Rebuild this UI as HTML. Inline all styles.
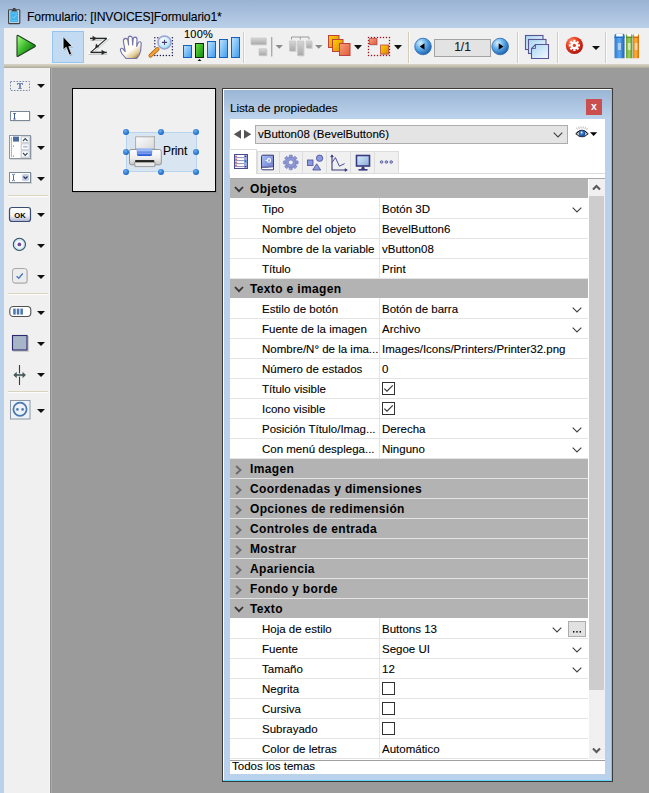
<!DOCTYPE html>
<html><head><meta charset="utf-8">
<style>
*{margin:0;padding:0;box-sizing:border-box}
html,body{width:649px;height:793px;overflow:hidden}
body{position:relative;background:#9b9b9b;font-family:"Liberation Sans",sans-serif;color:#000}
.a{position:absolute}
.ic,.cv{position:absolute;display:block}
#title{left:0;top:0;width:649px;height:28px;background:linear-gradient(#99b3d2,#bad0e9)}
#lborder{left:0;top:28px;width:4px;height:765px;background:#b9d1ea}
#toolbar{left:4px;top:28px;width:645px;height:36px;background:#f0f0f0}
#band{left:4px;top:64px;width:645px;height:4px;background:linear-gradient(#d9d5c6,#c4c0b0 60%,#a9a79b)}
#palette{left:4px;top:68px;width:46px;height:725px;background:#f0f0f0}
#palb{left:49px;top:68px;width:3px;height:725px;background:linear-gradient(90deg,#f7f7f7 33.3%,#8f8f8f 33.3%,#8f8f8f 66.6%,#ababab 66.6%)}
.sep{position:absolute;width:2px;background:linear-gradient(90deg,#d6cdb8 50%,#fbfbf8 50%)}
.hsep{position:absolute;height:2px;left:8px;width:40px;background:linear-gradient(#d9d4bc 50%,#fdfdfd 50%)}
.darr{position:absolute;width:0;height:0;border-left:4px solid transparent;border-right:4px solid transparent;border-top:4px solid #111}
#canvas{left:72px;top:88px;width:144px;height:104px;background:#f0f0f0;border:1px solid #000;box-shadow:1px 1px 0 rgba(0,0,0,0.08)}
#pw{left:222px;top:88px;width:391px;height:694px;background:#b9d1ea;border:1px solid #3a3a3a}
#pwgrad{left:223px;top:89px;width:388px;height:30px;background:linear-gradient(#9bb5d5,#bcd3ec);border-top:1px solid #fff}
#pwwl{left:223px;top:89px;width:1px;height:691px;background:#fff}
#pwcyan{left:611px;top:89px;width:1px;height:691px;background:#5fd3f5}
#pwcyanb{left:223px;top:780px;width:389px;height:1px;background:#5fd3f5}
#content{left:230px;top:119px;width:375px;height:655px;background:#fff}
.hd{position:absolute;left:230px;width:358px;height:19px;background:#b3b3b3}
.ht{position:absolute;left:250px;height:20px;line-height:20px;font-weight:bold;font-size:12px;letter-spacing:0.35px;color:#000;white-space:nowrap}
.rl{position:absolute;left:230px;width:358px;height:1px;background:#e4e4e4}
.cl{position:absolute;left:379px;width:1px;height:20px;background:#e4e4e4}
.nt{-webkit-text-stroke:0.1px #000;position:absolute;left:262px;height:20px;line-height:20px;font-size:11.5px;white-space:nowrap}
.vt{-webkit-text-stroke:0.1px #000;position:absolute;left:382px;height:20px;line-height:20px;font-size:11.5px;white-space:nowrap}
.chk{position:absolute;left:382px;width:13px;height:13px;border:1px solid #333;background:#fff}
.dotsb{position:absolute;left:568px;width:18px;height:16px;background:#e1e1e1;border:1px solid #adadad;font-size:11px;line-height:11px;text-align:center;letter-spacing:0px}
.hdl{position:absolute;width:6px;height:6px;border-radius:50%;background:radial-gradient(circle at 40% 35%,#6ab0f0,#1a68c8 70%)}
.txt{-webkit-text-stroke:0.1px #000;position:absolute;white-space:nowrap;font-size:11.5px}
</style></head><body>
<div class="a" id="title"></div>
<div class="a" id="lborder"></div>
<div class="a" id="toolbar"></div>
<div class="a" id="band"></div>
<div class="a" id="palette"></div>
<div class="a" id="palb"></div>

<!-- title -->
<svg class="ic" style="left:8px;top:8px" width="13" height="17" viewBox="0 0 13 17"><rect x="0.6" y="1.8" width="11.2" height="13.8" rx="0.6" fill="#c4d8ee" stroke="#404040" stroke-width="1.1"/><rect x="2.3" y="3.3" width="7.8" height="10.8" fill="#40b4ec"/><rect x="4.9" y="0" width="2.6" height="2.4" fill="#404040"/><rect x="3.6" y="2" width="5.2" height="1.4" fill="#404040"/><path d="M4 8.6 L5.6 10.2 L8.6 7" fill="none" stroke="#9fd8f4" stroke-width="0.8"/><path d="M3.4 5.2 H9 M3.4 12.6 H9" stroke="#7cc8f0" stroke-width="0.6"/></svg>
<div class="txt" style="left:27px;top:7px;line-height:20px;font-size:12.2px;letter-spacing:-0.15px">Formulario: [INVOICES]Formulario1*</div>


<!-- toolbar icons -->
<svg class="ic" style="left:14px;top:33px" width="24" height="26" viewBox="0 0 24 26">
<defs><linearGradient id="gplay" x1="0" y1="0.1" x2="0.9" y2="0.9"><stop offset="0" stop-color="#a0fa80"/><stop offset="0.5" stop-color="#3cb82c"/><stop offset="1" stop-color="#0c6a0e"/></linearGradient></defs>
<path d="M3 3.2 Q3 2 4.1 2.6 L20.8 12.1 Q21.9 12.9 20.8 13.7 L4.1 23.3 Q3 23.9 3 22.7 Z" fill="url(#gplay)" stroke="#1e3e1e" stroke-width="1.1" stroke-linejoin="round"/>
</svg>
<div class="a" style="left:52px;top:31px;width:32px;height:32px;background:#c2dbf2;border:1px solid #96c6f0"></div>
<svg class="ic" style="left:60px;top:35px" width="16" height="22" viewBox="0 0 16 22">
<path d="M3.1 1.6 L3.1 14.8 L6.2 12.2 L9.2 20 L11.6 19 L8.8 11.6 L12.4 11.4 Z" fill="rgba(0,0,0,0.25)" transform="translate(0.8 1)"/>
<path d="M3.1 1.6 L3.1 14.8 L6.2 12.2 L9.2 20 L11.6 19 L8.8 11.6 L12.4 11.4 Z" fill="#000" stroke="#fff" stroke-width="0.7" stroke-linejoin="round"/>
</svg>
<svg class="ic" style="left:87px;top:34px" width="24" height="24" viewBox="0 0 24 24">
<g fill="none" stroke="rgba(0,0,0,0.16)" stroke-width="2.4" transform="translate(0.3 1.3)"><path d="M3 4.4 H19.8 L3.6 18.4 H19.8"/></g>
<g fill="none" stroke="#fff" stroke-width="3" opacity="0.85"><path d="M3 4.4 H19.8 L3.6 18.4 H19.8"/></g>
<g stroke="#262a2a" fill="none"><path d="M3 4.4 H19.8" stroke-width="1.5"/><path d="M19.8 4.4 L3.6 18.4" stroke-width="1.25"/><path d="M3.6 18.4 H19.8" stroke-width="1.5"/></g>
<g fill="#262a2a"><path d="M5.6 1.8 L9.8 4.4 L5.6 7 Z"/><path d="M14.6 15.8 L18.8 18.4 L14.6 21 Z"/><path d="M8.2 14 L9 9.6 L12.2 12.9 Z"/></g>
</svg>
<svg class="ic" style="left:118px;top:34px" width="26" height="27" viewBox="0 0 26 27">
<defs><linearGradient id="ghand" x1="0.1" y1="0" x2="0.75" y2="1"><stop offset="0" stop-color="#ffffe4"/><stop offset="0.62" stop-color="#fffcf4"/><stop offset="0.85" stop-color="#e2cc98"/><stop offset="1" stop-color="#a88234"/></linearGradient></defs>
<path d="M8 24.5 L4.2 20 Q2 17 2.4 15.2 Q3.2 13.6 5 14.8 L7.2 17.6 L5.4 7.4 Q5.2 4.6 7.6 4.4 Q9.6 4.4 9.9 6.6 L10.6 11 L10.2 4.2 Q10.2 2.2 12.2 2.1 Q14.2 2.2 14.3 4.2 L14.7 11 L15.1 5.4 Q15.3 3.1 17.1 3.1 Q19.1 3.3 19 5.4 L18.7 12.4 L19.9 9.4 Q20.6 7.6 22 7.8 Q23.5 8.2 23.2 10 L22.6 17 Q22 20.6 18.6 24.5 Z" fill="url(#ghand)" stroke="#7474ac" stroke-width="1.15" stroke-linejoin="round"/>
</svg>
<svg class="ic" style="left:147px;top:33px" width="28" height="26" viewBox="0 0 28 26">
<g fill="#1d1d55"><circle cx="7.8" cy="4.8" r="0.75"/><circle cx="10.8" cy="4.8" r="0.75"/><circle cx="25.4" cy="4.8" r="0.75"/><circle cx="25.4" cy="7.8" r="0.75"/><circle cx="25.4" cy="10.8" r="0.75"/><circle cx="25.4" cy="13.8" r="0.75"/><circle cx="25.4" cy="16.8" r="0.75"/><circle cx="25.4" cy="19.8" r="0.75"/><circle cx="25.4" cy="22.6" r="0.75"/><circle cx="22.4" cy="22.6" r="0.75"/><circle cx="19.4" cy="22.6" r="0.75"/><circle cx="16.4" cy="22.6" r="0.75"/><circle cx="13.4" cy="22.6" r="0.75"/><circle cx="10.4" cy="22.6" r="0.75"/><circle cx="7.8" cy="22.6" r="0.75"/><circle cx="7.8" cy="7.8" r="0.75"/><circle cx="7.8" cy="10.8" r="0.75"/><circle cx="7.8" cy="13.8" r="0.75"/></g>
<path d="M3.5 22.6 L10.5 16" stroke="#a05a10" stroke-width="4" stroke-linecap="round"/>
<path d="M3.5 22.6 L10.5 16" stroke="#f5a030" stroke-width="2.6" stroke-linecap="round"/>
<defs><radialGradient id="glens" cx="0.4" cy="0.35" r="0.7"><stop offset="0" stop-color="#ffffff"/><stop offset="0.6" stop-color="#c8eefa"/><stop offset="1" stop-color="#8ccbe8"/></radialGradient></defs>
<circle cx="17.5" cy="9.4" r="6.5" fill="url(#glens)" stroke="#9aa2d4" stroke-width="1.5"/>
<path d="M17.5 6.8 V12 M14.9 9.4 H20.1" stroke="#4a3e70" stroke-width="1.1"/>
</svg>
<div class="txt" style="left:184px;top:28px;font-size:11px;line-height:12px;letter-spacing:0.2px">100%</div>
<svg class="ic" style="left:182px;top:35px" width="60" height="27" viewBox="0 0 60 27">
<defs><linearGradient id="gbar" x1="0" y1="0" x2="1" y2="1"><stop offset="0" stop-color="#bfe4ff"/><stop offset="1" stop-color="#3a9af0"/></linearGradient>
<linearGradient id="gbarg" x1="0" y1="0" x2="1" y2="1"><stop offset="0" stop-color="#70e040"/><stop offset="1" stop-color="#0a8a10"/></linearGradient></defs>
<rect x="1.5" y="10.5" width="8" height="12" fill="url(#gbar)" stroke="#1660b8" stroke-width="1"/>
<rect x="13.5" y="8.5" width="8" height="14" fill="url(#gbarg)" stroke="#0a2a0a" stroke-width="1"/>
<rect x="25.5" y="6.5" width="8" height="16" fill="url(#gbar)" stroke="#1660b8" stroke-width="1"/>
<rect x="37.5" y="4.5" width="8" height="18" fill="url(#gbar)" stroke="#1660b8" stroke-width="1"/>
<rect x="49.5" y="2.5" width="8" height="20" fill="url(#gbar)" stroke="#1660b8" stroke-width="1"/>
<path d="M15.5 26 L17.5 24 L19.5 26 Z" fill="#111"/>
</svg>
<div class="sep" style="left:243px;top:32px;height:31px"></div>
<svg class="ic" style="left:248px;top:34px" width="76" height="24" viewBox="0 0 76 24">
<defs><linearGradient id="ggr" x1="0" y1="0" x2="0" y2="1"><stop offset="0" stop-color="#d6d6d6"/><stop offset="1" stop-color="#a9a9a9"/></linearGradient></defs>
<g fill="rgba(0,0,0,0.10)"><rect x="4" y="5" width="15" height="6.5"/><rect x="12" y="15.8" width="7.5" height="6.5"/></g>
<rect x="3" y="4" width="15" height="6.5" fill="url(#ggr)" stroke="#c4c4c4" stroke-width="0.6"/>
<rect x="11" y="14.8" width="7.5" height="6.5" fill="url(#ggr)" stroke="#c4c4c4" stroke-width="0.6"/>
<rect x="23.2" y="3" width="1.1" height="19.5" fill="#9a9a9a"/>
<path d="M27.5 11 L35 11 L31.25 14.8 Z" fill="#8a8a8a"/>
<path d="M43.5 5.5 V3 H61 V5.5 M52.3 3 V5.5" fill="none" stroke="#9a9a9a" stroke-width="1"/>
<g fill="rgba(0,0,0,0.10)"><rect x="42.6" y="8" width="6" height="10"/><rect x="50.6" y="8" width="6" height="14.5"/><rect x="59.2" y="8" width="5.6" height="7"/></g>
<rect x="41.6" y="7" width="5.8" height="10" fill="url(#ggr)" stroke="#c4c4c4" stroke-width="0.6"/>
<rect x="49.6" y="7" width="6" height="14.5" fill="url(#ggr)" stroke="#c4c4c4" stroke-width="0.6"/>
<rect x="58.2" y="7" width="5.6" height="7" fill="url(#ggr)" stroke="#c4c4c4" stroke-width="0.6"/>
<path d="M67 11 L74.5 11 L70.75 14.8 Z" fill="#8a8a8a"/>
</svg>
<svg class="ic" style="left:326px;top:33px" width="80" height="25" viewBox="0 0 80 25">
<defs><linearGradient id="gyel" x1="0" y1="0" x2="1" y2="1"><stop offset="0" stop-color="#ffd000"/><stop offset="1" stop-color="#d88a00"/></linearGradient>
<linearGradient id="gsal" x1="0" y1="0" x2="1" y2="1"><stop offset="0" stop-color="#f8a078"/><stop offset="1" stop-color="#e05a38"/></linearGradient></defs>
<rect x="2.5" y="2.5" width="10.5" height="12" fill="url(#gyel)" stroke="#c04040" stroke-width="1"/>
<rect x="6.5" y="6.5" width="10.5" height="12" fill="url(#gyel)" stroke="#c04040" stroke-width="1"/>
<rect x="13.5" y="10.5" width="10.5" height="12" fill="url(#gsal)" stroke="#c04040" stroke-width="1"/>
<path d="M28 12 L36 12 L32 16.5 Z" fill="#111"/>
<g fill="#a01018"><rect x="41.85" y="3.85" width="1.3" height="1.3"/><rect x="41.85" y="21.85" width="1.3" height="1.3"/><rect x="44.85" y="3.85" width="1.3" height="1.3"/><rect x="44.85" y="21.85" width="1.3" height="1.3"/><rect x="47.85" y="3.85" width="1.3" height="1.3"/><rect x="47.85" y="21.85" width="1.3" height="1.3"/><rect x="50.85" y="3.85" width="1.3" height="1.3"/><rect x="50.85" y="21.85" width="1.3" height="1.3"/><rect x="53.85" y="3.85" width="1.3" height="1.3"/><rect x="53.85" y="21.85" width="1.3" height="1.3"/><rect x="56.85" y="3.85" width="1.3" height="1.3"/><rect x="56.85" y="21.85" width="1.3" height="1.3"/><rect x="59.85" y="3.85" width="1.3" height="1.3"/><rect x="59.85" y="21.85" width="1.3" height="1.3"/><rect x="62.85" y="3.85" width="1.3" height="1.3"/><rect x="62.85" y="21.85" width="1.3" height="1.3"/><rect x="41.85" y="6.85" width="1.3" height="1.3"/><rect x="62.85" y="6.85" width="1.3" height="1.3"/><rect x="41.85" y="9.85" width="1.3" height="1.3"/><rect x="62.85" y="9.85" width="1.3" height="1.3"/><rect x="41.85" y="12.85" width="1.3" height="1.3"/><rect x="62.85" y="12.85" width="1.3" height="1.3"/><rect x="41.85" y="15.85" width="1.3" height="1.3"/><rect x="62.85" y="15.85" width="1.3" height="1.3"/><rect x="41.85" y="18.85" width="1.3" height="1.3"/><rect x="62.85" y="18.85" width="1.3" height="1.3"/></g>
<rect x="44.2" y="6.2" width="7.6" height="6.4" fill="rgba(0,0,0,0.15)"/>
<rect x="43.6" y="5.6" width="7.2" height="6" fill="url(#gsal)" stroke="#c04848" stroke-width="0.8"/>
<rect x="55.2" y="12.6" width="8.2" height="9.4" fill="rgba(0,0,0,0.15)"/>
<rect x="54.6" y="12" width="8" height="9" fill="url(#gyel)" stroke="#c04848" stroke-width="0.8"/>
<path d="M68 12 L76 12 L72 16.5 Z" fill="#111"/>
</svg>
<div class="sep" style="left:408px;top:32px;height:31px"></div>
<svg class="ic" style="left:413px;top:37px" width="98" height="21" viewBox="0 0 98 21">
<defs><radialGradient id="gnav" cx="0.35" cy="0.3" r="0.75"><stop offset="0" stop-color="#d8f0ff"/><stop offset="0.5" stop-color="#5aaae8"/><stop offset="1" stop-color="#1a5aa8"/></radialGradient></defs>
<circle cx="10" cy="9.5" r="8.3" fill="url(#gnav)" stroke="#2a68b0" stroke-width="0.8"/>
<path d="M6.8 9.5 L11.5 6.3 L11.5 12.7 Z" fill="#000"/>
<rect x="21.5" y="2.5" width="56" height="17" fill="#e3e3e3" stroke="#a3a3a3" stroke-width="1"/>
<circle cx="87.2" cy="9.5" r="8.3" fill="url(#gnav)" stroke="#2a68b0" stroke-width="0.8"/>
<path d="M90.4 9.5 L85.7 6.3 L85.7 12.7 Z" fill="#000"/>
</svg>
<div class="txt" style="left:434px;top:39px;width:57px;text-align:center;font-size:12px;line-height:17px;color:#1a1a1a">1/1</div>
<div class="sep" style="left:517px;top:32px;height:31px"></div>
<svg class="ic" style="left:523px;top:33px" width="28" height="28" viewBox="0 0 28 28">
<defs><linearGradient id="gwin" x1="0" y1="0" x2="1" y2="1"><stop offset="0" stop-color="#a8d6f2"/><stop offset="1" stop-color="#f2faff"/></linearGradient></defs>
<rect x="2.5" y="2.5" width="17.5" height="14" fill="url(#gwin)" stroke="#5a5494" stroke-width="1.1"/>
<rect x="5.5" y="6.5" width="17.5" height="14" fill="url(#gwin)" stroke="#5a5494" stroke-width="1.1"/>
<path d="M12.5 11.5 H25.5 V25.5 H8.5 V15.5 Z" fill="url(#gwin)" stroke="#5a5494" stroke-width="1.1"/>
<path d="M12.5 11.5 V15.5 H8.5" fill="none" stroke="#5a5494" stroke-width="0.9"/>
</svg>
<div class="sep" style="left:557px;top:32px;height:31px"></div>
<svg class="ic" style="left:564px;top:35px" width="38" height="21" viewBox="0 0 38 21">
<defs><radialGradient id="gred" cx="0.35" cy="0.3" r="0.8"><stop offset="0" stop-color="#ff9a70"/><stop offset="0.45" stop-color="#e83a20"/><stop offset="1" stop-color="#a01010"/></radialGradient></defs>
<circle cx="10.4" cy="10.4" r="8.6" fill="url(#gred)"/>
<g fill="#fff" transform="translate(10.4 10.4)">
<circle r="3.6"/>
<rect x="-1.1" y="-5.6" width="2.2" height="11.2"/><rect x="-5.6" y="-1.1" width="11.2" height="2.2"/>
<rect x="-1.1" y="-5.6" width="2.2" height="11.2" transform="rotate(45)"/><rect x="-5.6" y="-1.1" width="11.2" height="2.2" transform="rotate(45)"/>
</g>
<circle cx="10.4" cy="10.4" r="1.6" fill="#e04020"/>
<path d="M28 11 L36 11 L32 15 Z" fill="#111"/>
</svg>
<div class="sep" style="left:605px;top:32px;height:31px"></div>
<svg class="ic" style="left:612px;top:32px" width="30" height="28" viewBox="0 0 30 28">
<defs><linearGradient id="gbb" x1="0" y1="0" x2="1" y2="0"><stop offset="0" stop-color="#2e7ad0"/><stop offset="0.5" stop-color="#5aa8f0"/><stop offset="1" stop-color="#2060b0"/></linearGradient>
<linearGradient id="ggb" x1="0" y1="0" x2="1" y2="0"><stop offset="0" stop-color="#6aa030"/><stop offset="0.5" stop-color="#a0d060"/><stop offset="1" stop-color="#5a8a28"/></linearGradient>
<linearGradient id="gob" x1="0" y1="0" x2="1" y2="0"><stop offset="0" stop-color="#f08010"/><stop offset="0.5" stop-color="#ffb040"/><stop offset="1" stop-color="#d86a00"/></linearGradient></defs>
<path d="M2.5 3.5 Q2.5 1.8 4 1.8 L11 1.8 Q12.5 1.8 12.5 3.5 L12.5 26.3 L2.5 26.3 Z" fill="url(#gbb)"/>
<path d="M14 3.5 Q14 2 15.2 2 L19.2 2 Q20.4 2 20.4 3.5 L20.4 26.3 L14 26.3 Z" fill="url(#ggb)"/>
<path d="M21 3.5 Q21 2 22.2 2 L25.8 2 Q27 2 27 3.5 L27 26.3 L21 26.3 Z" fill="url(#gob)"/>
<rect x="4.2" y="1.8" width="6.6" height="3" fill="#ffffff"/>
<rect x="15.2" y="2" width="4" height="2.8" fill="#ffffff"/>
<rect x="22.2" y="2" width="3.6" height="2.8" fill="#ffffff"/>
<rect x="2.5" y="4.6" width="10" height="1.2" fill="#1a68c0"/><rect x="14" y="4.6" width="6.4" height="1.2" fill="#5a8a20"/><rect x="21" y="4.6" width="6" height="1.2" fill="#d06000"/>
<rect x="5.8" y="11" width="3.2" height="7" fill="#a8d0f4"/><rect x="15.8" y="11" width="2.8" height="7" fill="#d0e8b0"/><rect x="22.8" y="11" width="2.6" height="7" fill="#ffd8b0"/>
</svg>

<!-- palette -->
<div class="hsep" style="top:195px"></div>
<div class="hsep" style="top:293px"></div>
<div class="hsep" style="top:391px"></div>
<div class="darr" style="left:37px;top:84px"></div>
<div class="darr" style="left:37px;top:115px"></div>
<div class="darr" style="left:37px;top:146px"></div>
<div class="darr" style="left:37px;top:177px"></div>
<div class="darr" style="left:37px;top:213px"></div>
<div class="darr" style="left:37px;top:244px"></div>
<div class="darr" style="left:37px;top:275px"></div>
<div class="darr" style="left:37px;top:311px"></div>
<div class="darr" style="left:37px;top:342px"></div>
<div class="darr" style="left:37px;top:373px"></div>
<div class="darr" style="left:37px;top:409px"></div>


<svg class="ic" style="left:8px;top:79px" width="24" height="14" viewBox="0 0 24 14">
<rect x="2.5" y="2.5" width="19" height="9" fill="none" stroke="#7a8aa8" stroke-width="1" stroke-dasharray="1.6 1.4"/>
<path d="M9 4.2 H15 V5.9 H14.5 L14.1 5 H12.7 V9.1 H13.7 V9.7 H10.3 V9.1 H11.3 V5 H9.9 L9.5 5.9 H9 Z" fill="#4763a0"/>
</svg>
<svg class="ic" style="left:8px;top:109px" width="24" height="14" viewBox="0 0 24 14">
<rect x="3" y="3" width="19.5" height="9.5" fill="rgba(0,0,0,0.12)"/>
<rect x="2.5" y="2.5" width="19" height="9" fill="#fff" stroke="#7a8898" stroke-width="1"/>
<path d="M5.3 4.5 H7.7 M6.5 4.5 V10 M5.3 10 H7.7" stroke="#3a5a98" stroke-width="1"/>
</svg>
<svg class="ic" style="left:8px;top:134px" width="25" height="26" viewBox="0 0 25 26">
<rect x="2" y="2" width="22" height="24" fill="rgba(0,0,0,0.12)"/>
<rect x="1.5" y="1.5" width="21" height="23" fill="#fff" stroke="#8a96a4" stroke-width="1"/>
<rect x="12.5" y="2" width="9.5" height="22" fill="#dcdcdc"/>
<rect x="5" y="2.6" width="6" height="5" fill="#4a6aa0"/>
<g fill="#505050"><circle cx="3.4" cy="4" r="0.6"/><circle cx="3.4" cy="6" r="0.6"/><circle cx="3.4" cy="8" r="0.6"/><circle cx="3.4" cy="10" r="0.6"/><circle cx="3.4" cy="12" r="0.6"/><circle cx="3.4" cy="14" r="0.6"/><circle cx="3.4" cy="16" r="0.6"/><circle cx="3.4" cy="18" r="0.6"/><circle cx="3.4" cy="20" r="0.6"/><circle cx="3.4" cy="22" r="0.6"/><circle cx="5.4" cy="12" r="0.6"/><circle cx="5.4" cy="22" r="0.6"/></g>
<rect x="13.5" y="3" width="7.5" height="5.5" fill="#fff" stroke="#b8c0cc" stroke-width="0.6"/>
<rect x="13.5" y="10" width="7.5" height="5.5" fill="#fff" stroke="#b8c0cc" stroke-width="0.6"/>
<rect x="13.5" y="17" width="7.5" height="6" fill="#fff" stroke="#b8c0cc" stroke-width="0.6"/>
<path d="M15 7 L17.25 4.6 L19.5 7" fill="none" stroke="#3a4a60" stroke-width="1.2"/>
<rect x="14.8" y="11.8" width="5" height="2" rx="1" fill="#b8c4d8"/>
<path d="M15 19 L17.25 21.4 L19.5 19" fill="none" stroke="#3a4a60" stroke-width="1.2"/>
</svg>
<svg class="ic" style="left:8px;top:171px" width="25" height="14" viewBox="0 0 25 14">
<rect x="2" y="2" width="22" height="11" fill="rgba(0,0,0,0.12)"/>
<rect x="1.5" y="1.5" width="21" height="10" fill="#fff" stroke="#7a8898" stroke-width="1"/>
<path d="M4.2 3.2 Q5.5 3.6 5.5 4.4 V8.6 Q5.5 9.4 4.2 9.8 M6.8 3.2 Q5.5 3.6 5.5 4.4 M5.5 8.6 Q5.5 9.4 6.8 9.8" fill="none" stroke="#3a5a98" stroke-width="0.9"/>
<rect x="14" y="3" width="7" height="7" rx="1.5" fill="#c8d0e4"/>
<path d="M15.5 5.5 L17.5 7.6 L19.5 5.5" fill="none" stroke="#2a3a60" stroke-width="1.3"/>
</svg>
<svg class="ic" style="left:8px;top:205px" width="25" height="19" viewBox="0 0 25 19">
<defs><linearGradient id="gok" x1="0" y1="0" x2="0" y2="1"><stop offset="0" stop-color="#fff"/><stop offset="0.6" stop-color="#f2f2f6"/><stop offset="1" stop-color="#a8b0d0"/></linearGradient></defs>
<rect x="1.5" y="2.5" width="21" height="14" rx="2.5" fill="url(#gok)" stroke="#3a4a70" stroke-width="1.2"/>
<text x="12" y="12.6" text-anchor="middle" font-family="Liberation Sans" font-weight="bold" font-size="7.6" fill="#000">OK</text>
</svg>
<svg class="ic" style="left:12px;top:237px" width="15" height="15" viewBox="0 0 15 15">
<defs><radialGradient id="grad1" cx="0.5" cy="0.5" r="0.5"><stop offset="0.5" stop-color="#f8fcff"/><stop offset="1" stop-color="#a8d4e8"/></radialGradient></defs>
<circle cx="7.4" cy="7.4" r="6.1" fill="url(#grad1)" stroke="#3a5060" stroke-width="1.1"/>
<circle cx="7.4" cy="7.4" r="1.9" fill="#7a4a9a"/>
</svg>
<svg class="ic" style="left:11px;top:267px" width="18" height="18" viewBox="0 0 18 18">
<rect x="2" y="2" width="15" height="15" rx="2.5" fill="rgba(0,0,0,0.12)"/>
<rect x="1.5" y="1.5" width="14.5" height="14.5" rx="2.5" fill="#ececec" stroke="#a8a8a8" stroke-width="1"/>
<path d="M5.6 9.2 L7.8 11.2 L11.8 6.6" fill="none" stroke="#4a7cbc" stroke-width="1.5"/>
</svg>
<svg class="ic" style="left:8px;top:304px" width="25" height="15" viewBox="0 0 25 15">
<rect x="1.8" y="2.5" width="21" height="10" rx="3.5" fill="#fff" stroke="#505050" stroke-width="1.1"/>
<rect x="5.2" y="4.6" width="2.5" height="6" fill="#4a76ae"/><rect x="8.8" y="4.6" width="2.5" height="6" fill="#4a76ae"/><rect x="12.4" y="4.6" width="2.5" height="6" fill="#4a76ae"/>
</svg>
<svg class="ic" style="left:10px;top:333px" width="20" height="20" viewBox="0 0 20 20">
<rect x="3" y="3" width="16" height="16" fill="rgba(0,0,0,0.15)"/>
<rect x="2.5" y="2.5" width="14.5" height="14.5" fill="#a8b4c8" stroke="#2a2a70" stroke-width="1.1"/>
</svg>
<svg class="ic" style="left:11px;top:364px" width="18" height="22" viewBox="0 0 18 22">
<path d="M8.5 1 V21" stroke="#3a3a3a" stroke-width="1.1"/>
<path d="M1.8 11 L6 7 V9.7 H11.2 V7 L15.4 11 L11.2 15 V12.3 H6 V15 Z" fill="#4a5c5c" stroke="#fff" stroke-width="0.7" stroke-linejoin="round"/>
</svg>
<svg class="ic" style="left:9px;top:399px" width="22" height="21" viewBox="0 0 22 21">
<rect x="1.5" y="1.5" width="19.5" height="18.5" fill="#eef2f8" stroke="#8898a8" stroke-width="1"/>
<circle cx="11" cy="10.3" r="6.6" fill="none" stroke="#4a7ab0" stroke-width="1.8"/>
<circle cx="8.4" cy="10.4" r="1.3" fill="#4a7ab0"/><circle cx="13.6" cy="10.4" r="1.3" fill="#4a7ab0"/>
</svg>

<!-- canvas -->
<div class="a" id="canvas"></div>

<div class="a" style="left:126px;top:132px;width:71px;height:40px;background:#d9e5f1;border:1px solid #b6d4ee"></div>
<svg class="ic" style="left:128px;top:135px" width="35" height="34" viewBox="0 0 35 34">
<defs><linearGradient id="gpap" x1="0" y1="0" x2="1" y2="1"><stop offset="0" stop-color="#fff"/><stop offset="1" stop-color="#d8d8d8"/></linearGradient>
<linearGradient id="gbody" x1="0" y1="0" x2="0" y2="1"><stop offset="0" stop-color="#ffffff"/><stop offset="0.6" stop-color="#ececec"/><stop offset="1" stop-color="#c4c4c4"/></linearGradient>
<linearGradient id="gpb" x1="0" y1="0" x2="0" y2="1"><stop offset="0" stop-color="#b4cbf6"/><stop offset="0.5" stop-color="#6c94e8"/><stop offset="1" stop-color="#2458d8"/></linearGradient></defs>
<path d="M7.6 1.8 H25.6 L26.4 1 V14 H7.6 Z" fill="url(#gpap)" stroke="#9a9a9a" stroke-width="0.8"/>
<path d="M3 14.5 Q1.5 14.5 1.5 16.5 V28 Q1.5 29.8 3.5 29.8 H31.5 Q33.3 29.8 33.3 28 V16.5 Q33.3 14.5 31.5 14.5 Z" fill="url(#gbody)" stroke="#8c8c8c" stroke-width="0.9"/>
<path d="M8.5 13 H24.5 L24 19.5 Q24 21 22.5 21 H10.5 Q9 21 9 19.5 Z" fill="url(#gpb)"/><path d="M9.4 15.6 H23.8 M9.6 18.4 H23.6" stroke="rgba(255,255,255,0.45)" stroke-width="0.6"/>
<rect x="7.2" y="25.2" width="19" height="2.2" fill="#000"/>
<path d="M6.5 27.2 H27.2 L26.7 31.6 H7 Z" fill="#e8e8e8" stroke="#8a8a8a" stroke-width="0.8"/>
</svg>
<div class="txt" style="left:163px;top:144px;font-size:12px;line-height:14px;color:#000;letter-spacing:-0.1px">Print</div>
<div class="hdl" style="left:123px;top:129px"></div><div class="hdl" style="left:123px;top:149px"></div><div class="hdl" style="left:123px;top:169px"></div><div class="hdl" style="left:158px;top:129px"></div><div class="hdl" style="left:158px;top:169px"></div><div class="hdl" style="left:193px;top:129px"></div><div class="hdl" style="left:193px;top:149px"></div><div class="hdl" style="left:193px;top:169px"></div>

<!-- property window -->
<div class="a" id="pw"></div>
<div class="a" id="pwgrad"></div>
<div class="a" id="pwwl"></div>
<div class="a" id="pwcyan"></div>
<div class="a" id="pwcyanb"></div>
<div class="txt" style="left:230px;top:98px;line-height:20px;font-size:11.8px;letter-spacing:-0.1px">Lista de propiedades</div>
<div class="a" style="left:586px;top:99px;width:16px;height:16px;background:#c9504f;color:#fff;font-weight:bold;font-size:10.5px;line-height:15px;text-align:center">x</div>
<div class="a" id="content"></div>
<div class="a" style="left:230px;top:178px;width:375px;height:1px;background:#a8a8a8"></div>
<div class="hd" style="top:179px"></div>
<svg class="ic" style="left:234px;top:186px" width="10" height="7" viewBox="0 0 10 7"><path d="M1 1 L5 5.2 L9 1" fill="none" stroke="#333" stroke-width="1.8"/></svg>
<div class="ht" style="top:179px">Objetos</div>
<div class="rl" style="top:218px"></div>
<div class="cl" style="top:198px"></div>
<div class="nt" style="top:199px">Tipo</div>
<div class="vt" style="top:199px">Botón 3D</div>
<svg class="cv" style="left:572px;top:207px" width="10" height="6" viewBox="0 0 10 6"><path d="M0.7 0.7 L5 5 L9.3 0.7" fill="none" stroke="#404040" stroke-width="1.1"/></svg>
<div class="rl" style="top:238px"></div>
<div class="cl" style="top:218px"></div>
<div class="nt" style="top:219px">Nombre del objeto</div>
<div class="vt" style="top:219px">BevelButton6</div>
<div class="rl" style="top:258px"></div>
<div class="cl" style="top:238px"></div>
<div class="nt" style="top:239px">Nombre de la variable</div>
<div class="vt" style="top:239px">vButton08</div>
<div class="rl" style="top:278px"></div>
<div class="cl" style="top:258px"></div>
<div class="nt" style="top:259px">Título</div>
<div class="vt" style="top:259px">Print</div>
<div class="hd" style="top:279px"></div>
<div class="rl" style="top:278px"></div>
<svg class="ic" style="left:234px;top:286px" width="10" height="7" viewBox="0 0 10 7"><path d="M1 1 L5 5.2 L9 1" fill="none" stroke="#333" stroke-width="1.8"/></svg>
<div class="ht" style="top:279px">Texto e imagen</div>
<div class="rl" style="top:318px"></div>
<div class="cl" style="top:298px"></div>
<div class="nt" style="top:299px">Estilo de botón</div>
<div class="vt" style="top:299px">Botón de barra</div>
<svg class="cv" style="left:572px;top:307px" width="10" height="6" viewBox="0 0 10 6"><path d="M0.7 0.7 L5 5 L9.3 0.7" fill="none" stroke="#404040" stroke-width="1.1"/></svg>
<div class="rl" style="top:338px"></div>
<div class="cl" style="top:318px"></div>
<div class="nt" style="top:319px">Fuente de la imagen</div>
<div class="vt" style="top:319px">Archivo</div>
<svg class="cv" style="left:572px;top:327px" width="10" height="6" viewBox="0 0 10 6"><path d="M0.7 0.7 L5 5 L9.3 0.7" fill="none" stroke="#404040" stroke-width="1.1"/></svg>
<div class="rl" style="top:358px"></div>
<div class="cl" style="top:338px"></div>
<div class="nt" style="top:339px">Nombre/N° de la ima...</div>
<div class="vt" style="top:339px">Images/Icons/Printers/Printer32.png</div>
<div class="rl" style="top:378px"></div>
<div class="cl" style="top:358px"></div>
<div class="nt" style="top:359px">Número de estados</div>
<div class="vt" style="top:359px">0</div>
<div class="rl" style="top:398px"></div>
<div class="cl" style="top:378px"></div>
<div class="nt" style="top:379px">Título visible</div>
<div class="chk" style="top:382px"></div>
<svg class="ic" style="left:382px;top:382px" width="13" height="13" viewBox="0 0 13 13"><path d="M2.3 6.6 L5 9.2 L10.8 3.3" fill="none" stroke="#333" stroke-width="1.1"/></svg>
<div class="rl" style="top:418px"></div>
<div class="cl" style="top:398px"></div>
<div class="nt" style="top:399px">Icono visible</div>
<div class="chk" style="top:402px"></div>
<svg class="ic" style="left:382px;top:402px" width="13" height="13" viewBox="0 0 13 13"><path d="M2.3 6.6 L5 9.2 L10.8 3.3" fill="none" stroke="#333" stroke-width="1.1"/></svg>
<div class="rl" style="top:438px"></div>
<div class="cl" style="top:418px"></div>
<div class="nt" style="top:419px">Posición Título/Imag...</div>
<div class="vt" style="top:419px">Derecha</div>
<svg class="cv" style="left:572px;top:427px" width="10" height="6" viewBox="0 0 10 6"><path d="M0.7 0.7 L5 5 L9.3 0.7" fill="none" stroke="#404040" stroke-width="1.1"/></svg>
<div class="rl" style="top:458px"></div>
<div class="cl" style="top:438px"></div>
<div class="nt" style="top:439px">Con menú desplega...</div>
<div class="vt" style="top:439px">Ninguno</div>
<svg class="cv" style="left:572px;top:447px" width="10" height="6" viewBox="0 0 10 6"><path d="M0.7 0.7 L5 5 L9.3 0.7" fill="none" stroke="#404040" stroke-width="1.1"/></svg>
<div class="hd" style="top:459px"></div>
<div class="rl" style="top:458px"></div>
<svg class="ic" style="left:235px;top:465px" width="7" height="10" viewBox="0 0 7 10"><path d="M1.1 0.9 L5.5 5 L1.1 9.1" fill="none" stroke="#6c6c6c" stroke-width="2"/></svg>
<div class="ht" style="top:459px">Imagen</div>
<div class="hd" style="top:479px"></div>
<div class="rl" style="top:478px"></div>
<svg class="ic" style="left:235px;top:485px" width="7" height="10" viewBox="0 0 7 10"><path d="M1.1 0.9 L5.5 5 L1.1 9.1" fill="none" stroke="#6c6c6c" stroke-width="2"/></svg>
<div class="ht" style="top:479px">Coordenadas y dimensiones</div>
<div class="hd" style="top:499px"></div>
<div class="rl" style="top:498px"></div>
<svg class="ic" style="left:235px;top:505px" width="7" height="10" viewBox="0 0 7 10"><path d="M1.1 0.9 L5.5 5 L1.1 9.1" fill="none" stroke="#6c6c6c" stroke-width="2"/></svg>
<div class="ht" style="top:499px">Opciones de redimensión</div>
<div class="hd" style="top:519px"></div>
<div class="rl" style="top:518px"></div>
<svg class="ic" style="left:235px;top:525px" width="7" height="10" viewBox="0 0 7 10"><path d="M1.1 0.9 L5.5 5 L1.1 9.1" fill="none" stroke="#6c6c6c" stroke-width="2"/></svg>
<div class="ht" style="top:519px">Controles de entrada</div>
<div class="hd" style="top:539px"></div>
<div class="rl" style="top:538px"></div>
<svg class="ic" style="left:235px;top:545px" width="7" height="10" viewBox="0 0 7 10"><path d="M1.1 0.9 L5.5 5 L1.1 9.1" fill="none" stroke="#6c6c6c" stroke-width="2"/></svg>
<div class="ht" style="top:539px">Mostrar</div>
<div class="hd" style="top:559px"></div>
<div class="rl" style="top:558px"></div>
<svg class="ic" style="left:235px;top:565px" width="7" height="10" viewBox="0 0 7 10"><path d="M1.1 0.9 L5.5 5 L1.1 9.1" fill="none" stroke="#6c6c6c" stroke-width="2"/></svg>
<div class="ht" style="top:559px">Apariencia</div>
<div class="hd" style="top:579px"></div>
<div class="rl" style="top:578px"></div>
<svg class="ic" style="left:235px;top:585px" width="7" height="10" viewBox="0 0 7 10"><path d="M1.1 0.9 L5.5 5 L1.1 9.1" fill="none" stroke="#6c6c6c" stroke-width="2"/></svg>
<div class="ht" style="top:579px">Fondo y borde</div>
<div class="hd" style="top:599px"></div>
<div class="rl" style="top:598px"></div>
<svg class="ic" style="left:234px;top:606px" width="10" height="7" viewBox="0 0 10 7"><path d="M1 1 L5 5.2 L9 1" fill="none" stroke="#333" stroke-width="1.8"/></svg>
<div class="ht" style="top:599px">Texto</div>
<div class="rl" style="top:638px"></div>
<div class="cl" style="top:618px"></div>
<div class="nt" style="top:619px">Hoja de estilo</div>
<div class="vt" style="top:619px">Buttons 13</div>
<svg class="cv" style="left:552px;top:627px" width="10" height="6" viewBox="0 0 10 6"><path d="M0.7 0.7 L5 5 L9.3 0.7" fill="none" stroke="#404040" stroke-width="1.1"/></svg>
<div class="dotsb" style="top:621px"></div>
<svg class="ic" style="left:568px;top:621px" width="18" height="16" viewBox="0 0 18 16"><g fill="#111"><rect x="5" y="10" width="1.4" height="1.6"/><rect x="8.3" y="10" width="1.4" height="1.6"/><rect x="11.6" y="10" width="1.4" height="1.6"/></g></svg>
<div class="rl" style="top:658px"></div>
<div class="cl" style="top:638px"></div>
<div class="nt" style="top:639px">Fuente</div>
<div class="vt" style="top:639px">Segoe UI</div>
<svg class="cv" style="left:572px;top:647px" width="10" height="6" viewBox="0 0 10 6"><path d="M0.7 0.7 L5 5 L9.3 0.7" fill="none" stroke="#404040" stroke-width="1.1"/></svg>
<div class="rl" style="top:678px"></div>
<div class="cl" style="top:658px"></div>
<div class="nt" style="top:659px">Tamaño</div>
<div class="vt" style="top:659px">12</div>
<svg class="cv" style="left:572px;top:667px" width="10" height="6" viewBox="0 0 10 6"><path d="M0.7 0.7 L5 5 L9.3 0.7" fill="none" stroke="#404040" stroke-width="1.1"/></svg>
<div class="rl" style="top:698px"></div>
<div class="cl" style="top:678px"></div>
<div class="nt" style="top:679px">Negrita</div>
<div class="chk" style="top:682px"></div>
<div class="rl" style="top:718px"></div>
<div class="cl" style="top:698px"></div>
<div class="nt" style="top:699px">Cursiva</div>
<div class="chk" style="top:702px"></div>
<div class="rl" style="top:738px"></div>
<div class="cl" style="top:718px"></div>
<div class="nt" style="top:719px">Subrayado</div>
<div class="chk" style="top:722px"></div>
<div class="rl" style="top:758px"></div>
<div class="cl" style="top:738px"></div>
<div class="nt" style="top:739px">Color de letras</div>
<div class="vt" style="top:739px">Automático</div>

<!-- nav arrows + combo -->
<svg class="ic" style="left:233px;top:129px" width="20" height="11" viewBox="0 0 20 11">
<path d="M0.8 5.3 L8 0.8 V9.8 Z" fill="#555"/><path d="M11 0.8 L18.2 5.3 L11 9.8 Z" fill="#555"/>
</svg>
<div class="a" style="left:255px;top:125px;width:313px;height:19px;background:#e4e4e4;border:1px solid #adadad"></div>
<div class="txt" style="left:258px;top:125px;line-height:19px;font-size:11.5px">vButton08 (BevelButton6)</div>
<svg class="cv" style="left:553px;top:132px" width="10" height="6" viewBox="0 0 10 6"><path d="M0.7 0.7 L5 5 L9.3 0.7" fill="none" stroke="#404040" stroke-width="1.1"/></svg>
<svg class="ic" style="left:574px;top:126px" width="25" height="14" viewBox="0 0 25 14">
<defs><radialGradient id="geye" cx="0.45" cy="0.4" r="0.6"><stop offset="0" stop-color="#5aa0f0"/><stop offset="1" stop-color="#083a8a"/></radialGradient></defs>
<path d="M2.4 1.6 L3.4 3.4 M4.6 0.8 L5.2 2.8 M7 0.4 V2.4 M9.4 0.6 L9 2.6 M11.6 1.2 L10.8 3 M13.4 2.2 L12.4 3.8" stroke="#999" stroke-width="0.7"/>
<path d="M2 7.8 Q8 0.8 14 7.8 Q8 13.6 2 7.8 Z" fill="#f2ecdc" stroke="#3a3a3a" stroke-width="1.1"/>
<path d="M2.6 7 Q8 1.6 13.4 7" fill="none" stroke="#111" stroke-width="0.9"/>
<circle cx="8" cy="7.6" r="3.3" fill="url(#geye)"/>
<circle cx="7.6" cy="6.3" r="0.9" fill="#fff"/>
<path d="M16 6.2 H23.2 L19.6 9.9 Z" fill="#000"/>
</svg>
<!-- tabs -->
<div class="a" style="left:230px;top:173px;width:375px;height:1px;background:#dcdcdc"></div>
<div class="a" style="left:257px;top:151px;width:142px;height:22px;background:#f0f0f0;border:1px solid #dcdcdc;border-bottom:none"></div>
<div class="a" style="left:279px;top:151px;width:1px;height:22px;background:#dcdcdc"></div>
<div class="a" style="left:302px;top:151px;width:1px;height:22px;background:#dcdcdc"></div>
<div class="a" style="left:326px;top:151px;width:1px;height:22px;background:#dcdcdc"></div>
<div class="a" style="left:350px;top:151px;width:1px;height:22px;background:#dcdcdc"></div>
<div class="a" style="left:374px;top:151px;width:1px;height:22px;background:#dcdcdc"></div>
<div class="a" style="left:229px;top:149px;width:28px;height:25px;background:#fff;border:1px solid #dcdcdc;border-bottom:none"></div>
<svg class="ic" style="left:233px;top:153px" width="16" height="17" viewBox="0 0 16 17">
<rect x="1.5" y="1.5" width="13" height="14" fill="#fff" stroke="#4a4a90" stroke-width="1"/>
<g stroke="#8080b0" stroke-width="0.9"><path d="M2 4.6 H11 M2 7.6 H11 M2 10.6 H11 M2 13.6 H11"/></g>
<rect x="11" y="2" width="3" height="13" fill="#a0a8e0"/>
<path d="M11.2 4 L12.5 2.4 L13.8 4 Z M11.2 13 L12.5 14.6 L13.8 13 Z" fill="#3a3a80"/>
<rect x="11.5" y="7.2" width="2" height="2" fill="#2a78c0"/>
<g fill="#d01818"><circle cx="3" cy="3.3" r="0.8"/><circle cx="3" cy="6.2" r="0.8"/><circle cx="3" cy="9.2" r="0.8"/><circle cx="3" cy="12.2" r="0.8"/></g>
</svg>
<svg class="ic" style="left:259px;top:154px" width="17" height="17" viewBox="0 0 17 17">
<defs><linearGradient id="gbook" x1="0" y1="0" x2="1" y2="1"><stop offset="0" stop-color="#a8c0f8"/><stop offset="1" stop-color="#6a78c8"/></linearGradient></defs>
<path d="M2.5 2.5 Q2.5 1.2 3.8 1.2 H14.5 V13.2 H3.8 Q2.5 13.2 2.5 14.5 Z" fill="url(#gbook)" stroke="#3a3a78" stroke-width="1"/>
<path d="M2.5 14.5 Q2.5 15.8 3.8 15.8 H14.5 V13.2" fill="#fff" stroke="#3a3a78" stroke-width="1"/>
<ellipse cx="10" cy="6.4" rx="1.5" ry="1.8" fill="none" stroke="#fff" stroke-width="1.1"/><path d="M6.6 6.4 H8.4" stroke="#fff" stroke-width="1"/>
</svg>
<svg class="ic" style="left:282px;top:154px" width="18" height="18" viewBox="0 0 18 18">
<g transform="translate(8.8 8.4)" fill="#8d98d6" stroke="#6a72b4" stroke-width="0.5"><rect x="-1.6" y="-7.4" width="3.2" height="3.4" rx="0.6" transform="rotate(0)"/><rect x="-1.6" y="-7.4" width="3.2" height="3.4" rx="0.6" transform="rotate(45)"/><rect x="-1.6" y="-7.4" width="3.2" height="3.4" rx="0.6" transform="rotate(90)"/><rect x="-1.6" y="-7.4" width="3.2" height="3.4" rx="0.6" transform="rotate(135)"/><rect x="-1.6" y="-7.4" width="3.2" height="3.4" rx="0.6" transform="rotate(180)"/><rect x="-1.6" y="-7.4" width="3.2" height="3.4" rx="0.6" transform="rotate(225)"/><rect x="-1.6" y="-7.4" width="3.2" height="3.4" rx="0.6" transform="rotate(270)"/><rect x="-1.6" y="-7.4" width="3.2" height="3.4" rx="0.6" transform="rotate(315)"/><circle r="5.2"/></g>
<circle cx="8.8" cy="8.4" r="2.4" fill="#eef0f8" stroke="#6a72b4" stroke-width="0.6"/>
</svg>
<svg class="ic" style="left:305px;top:153px" width="20" height="19" viewBox="0 0 20 19">
<rect x="2.5" y="7" width="5.5" height="5.5" fill="#8a9ae0" stroke="#4a4a98" stroke-width="0.8"/>
<circle cx="14.6" cy="5.2" r="3.2" fill="#8a9ae0" stroke="#4a4a98" stroke-width="0.8"/>
<path d="M11.7 10.8 L15.7 17 H7.7 Z" fill="#8a9ae0" stroke="#4a4a98" stroke-width="0.8"/>
</svg>
<svg class="ic" style="left:329px;top:153px" width="20" height="19" viewBox="0 0 20 19">
<path d="M3 2.2 V17 H17.6" fill="none" stroke="#3a3a80" stroke-width="1.1"/>
<path d="M1.6 3.8 L3 1.8 L4.4 3.8 Z M16 15.6 L18.4 17 L16 18.4 Z" fill="#3a3a80" stroke="#3a3a80" stroke-width="0.6"/>
<path d="M3 9.6 L6.4 4.6 L10.4 13.2 L15.6 10.6" fill="none" stroke="#4a4a90" stroke-width="1"/>
</svg>
<svg class="ic" style="left:354px;top:153px" width="18" height="19" viewBox="0 0 18 19">
<defs><linearGradient id="gmon" x1="0" y1="0" x2="1" y2="1"><stop offset="0" stop-color="#d8f0ff"/><stop offset="1" stop-color="#8aa8d8"/></linearGradient></defs>
<rect x="2.5" y="2.5" width="13" height="10.5" fill="url(#gmon)" stroke="#3a3a80" stroke-width="1.6"/>
<path d="M8 13.5 H10 L10.8 16 H7.2 Z" fill="#3a3a80"/><rect x="4.5" y="16" width="9" height="1.6" fill="#3a3a80"/>
</svg>
<svg class="ic" style="left:378px;top:158px" width="17" height="8" viewBox="0 0 17 8">
<g fill="#a8acd8" stroke="#5a62a8" stroke-width="0.9"><circle cx="3.6" cy="4" r="1.3"/><circle cx="8.4" cy="4" r="1.3"/><circle cx="13.2" cy="4" r="1.3"/></g>
</svg>
<!-- scrollbar -->
<div class="a" style="left:588px;top:179px;width:17px;height:580px;background:#f0f0f0;border-left:1px solid #fff"></div>
<div class="a" style="left:589px;top:196px;width:15px;height:494px;background:#cdcdcd"></div>
<svg class="cv" style="left:592px;top:184px" width="9" height="7" viewBox="0 0 9 7"><path d="M1 5.6 L4.5 2 L8 5.6" fill="none" stroke="#5a5a5a" stroke-width="2.1"/></svg>
<svg class="cv" style="left:592px;top:747px" width="9" height="7" viewBox="0 0 9 7"><path d="M1 1.4 L4.5 5 L8 1.4" fill="none" stroke="#5a5a5a" stroke-width="2.1"/></svg>
<!-- footer -->
<div class="a" style="left:230px;top:760px;width:375px;height:1px;background:#a0a0a0"></div>
<div class="txt" style="left:232px;top:758px;line-height:17px;font-size:11.5px">Todos los temas</div>

</body></html>
